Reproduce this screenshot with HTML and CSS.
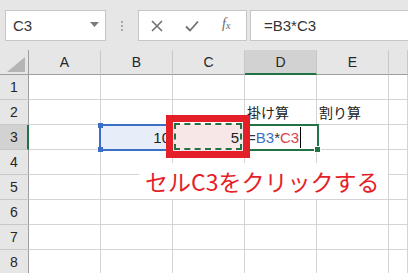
FILE: index.html
```html
<!DOCTYPE html>
<html lang="ja">
<head>
<meta charset="utf-8">
<link rel="stylesheet" href="styles.css">
</head>
<body>
<div class="app">
  <div class="toolbar">
    <div class="namebox">
      <span class="name">C3</span>
      <svg class="caret" width="9" height="5" viewBox="0 0 9 5"><path d="M0 0H9L4.5 5Z" fill="#7a7a7a"/></svg>
    </div>
    <div class="grip"><i></i><i></i><i></i></div>
    <div class="fbtns">
      <svg class="ic" width="12" height="12" viewBox="0 0 12 12"><path d="M1 1L11 11M11 1L1 11" stroke="#707070" stroke-width="1.6" fill="none"/></svg>
      <svg class="ic" width="14" height="12" viewBox="0 0 14 12"><path d="M1 6.5L5 10.5L13 1.5" stroke="#707070" stroke-width="1.8" fill="none"/></svg>
      <span class="fx">f<sub>x</sub></span>
    </div>
    <div class="finput">=B3*C3</div>
  </div>
  <div class="sheet">
    <div class="corner"><svg width="18" height="15" viewBox="0 0 18 15"><path d="M18 0V15H0Z" fill="#b5b5b5"/></svg></div>
    <div class="ch">A</div><div class="ch">B</div><div class="ch">C</div><div class="ch ch-sel">D</div><div class="ch">E</div><div class="ch"></div>

    <div class="rh">1</div><div class="c"></div><div class="c"></div><div class="c"></div><div class="c"></div><div class="c"></div><div class="c"></div>
    <div class="rh">2</div><div class="c"></div><div class="c"></div><div class="c"></div><div class="c jp">掛け算</div><div class="c jp">割り算</div><div class="c"></div>
    <div class="rh rh-sel">3</div><div class="c"></div><div class="c"></div><div class="c"></div><div class="c"></div><div class="c"></div><div class="c"></div>
    <div class="rh">4</div><div class="c"></div><div class="c"></div><div class="c"></div><div class="c"></div><div class="c"></div><div class="c"></div>
    <div class="rh">5</div><div class="c"></div><div class="c"></div><div class="c"></div><div class="c"></div><div class="c"></div><div class="c"></div>
    <div class="rh">6</div><div class="c"></div><div class="c"></div><div class="c"></div><div class="c"></div><div class="c"></div><div class="c"></div>
    <div class="rh">7</div><div class="c"></div><div class="c"></div><div class="c"></div><div class="c"></div><div class="c"></div><div class="c"></div>
    <div class="rh">8</div><div class="c"></div><div class="c"></div><div class="c"></div><div class="c"></div><div class="c"></div><div class="c"></div>

    <div class="ref-b3"><span class="val">10</span><i class="h h-tl"></i><i class="h h-bl"></i></div>
    <div class="ref-c3"><span class="val">5</span></div>
    <div class="callout-box"><div class="marquee"></div></div>
    <div class="active-d3"><span class="eq">=</span><span class="rb">B3</span><span class="eq">*</span><span class="rc">C3</span><i class="cursor"></i><i class="fill"></i></div>
    <div class="label">セルC3をクリックする</div>
  </div>
</div>
</body>
</html>
```

FILE: styles.css
```css
* { box-sizing: border-box; }
html, body { margin: 0; padding: 0; }
body {
  width: 408px; height: 273px; overflow: hidden;
  background: #fff;
  font-family: "Liberation Sans", "Noto Sans CJK JP", sans-serif;
  color: #222;
}
.app { width: 408px; height: 273px; overflow: hidden; }

.toolbar {
  height: 50px;
  background: #e6e6e6;
  display: flex;
  align-items: flex-start;
  padding: 10px 0 0 5px;
}
.namebox {
  width: 101px; height: 31px;
  background: #fff;
  border: 1px solid #c6c6c6;
  display: flex; align-items: center; justify-content: space-between;
  padding: 0 6px 0 7px;
}
.name { font-size: 15px; color: #333; }
.caret { margin-top: -2px; }
.grip {
  width: 32px; height: 31px;
  display: flex; flex-direction: column; align-items: center; justify-content: center; gap: 2px;
}
.grip i { display: block; width: 2px; height: 2px; background: #a8a8a8; }
.fbtns {
  width: 109px; height: 31px;
  background: #fff;
  border: 1px solid #c6c6c6;
  display: flex; align-items: center;
  padding: 0 0 0 12px;
}
.fbtns .ic:first-child { margin-right: 22px; }
.fbtns .ic:nth-child(2) { margin-right: 23px; }
.fx { font-family: "Liberation Serif", serif; font-style: italic; font-size: 14px; color: #6a6a6a; line-height: 1; margin-top: -3px; }
.fx sub { font-size: 10px; vertical-align: -1px; }
.finput {
  margin-left: 3px;
  flex: 1; height: 31px;
  background: #fff;
  border: 1px solid #c6c6c6; border-right: none;
  display: flex; align-items: center;
  padding-left: 13px;
  font-size: 15px; color: #333;
}

.sheet {
  position: relative;
  display: grid;
  grid-template-columns: 29px repeat(5, 72px) 1fr;
  grid-template-rows: repeat(9, 25px);
  height: 223px;
  overflow: hidden;
}
.corner, .ch, .rh {
  background: #e6e6e6;
  display: flex; align-items: center; justify-content: center;
  font-size: 14px; color: #262626;
}
.corner { border-right: 1px solid #9e9e9e; border-bottom: 1px solid #9e9e9e; align-items: flex-end; justify-content: flex-end; padding: 0 3px 2px 0; }
.ch { border-right: 1px solid #c8c8c8; border-bottom: 1px solid #9e9e9e; }
.ch-sel { background: #d2d2d2; border-bottom: 2px solid #217346; padding-top: 1px; }
.rh { border-right: 1px solid #9e9e9e; border-bottom: 1px solid #c8c8c8; }
.rh-sel { background: #d2d2d2; border-right: 2px solid #217346; padding-left: 1px; }
.c {
  border-right: 1px solid #d4d4d4; border-bottom: 1px solid #d4d4d4;
  font-size: 14px; display: flex; align-items: center; padding: 0 2px;
}
.jp { font-family: "Noto Sans CJK JP", sans-serif; font-size: 14px; color: #222; }

.ref-b3 {
  position: absolute; left: 99px; top: 74px; width: 74px; height: 27px;
  border: 2px solid #3b6fc6; background: #e8eef9;
  z-index: 1; display: flex; align-items: center; justify-content: flex-end;
  font-size: 15px; padding-right: 1px;
}
.h { position: absolute; width: 5px; height: 5px; background: #3b6fc6; }
.h-tl { left: -3px; top: -3px; }
.h-bl { left: -3px; bottom: -3px; }
.ref-c3 {
  position: absolute; left: 173px; top: 74px; width: 71px; height: 27px;
  background: #f7e7e7; z-index: 1;
  display: flex; align-items: center; justify-content: flex-end; padding-right: 5px;
  font-size: 15px;
}
.callout-box {
  position: absolute; left: 166px; top: 65px; width: 84px; height: 43px;
  border: 7px solid #e51f28; z-index: 2; padding: 1px;
}
.marquee {
  width: 100%; height: 100%;
  border: 2px dashed #217346;
}
.active-d3 {
  position: absolute; left: 244px; top: 74px; width: 75px; height: 27px;
  border: 2px solid #217346; background: #fff; z-index: 1;
  display: flex; align-items: center; padding-left: 1px;
  font-size: 15px;
}
.eq { color: #333; }
.rb { color: #3b6fc6; }
.rc { color: #d9414b; }
.cursor { display: block; width: 1px; height: 21px; background: #000; margin-left: 1px; }
.fill { position: absolute; right: -4px; bottom: -4px; width: 5px; height: 5px; background: #217346; border: 1px solid #fff; box-sizing: content-box; }
.label {
  position: absolute; left: 139px; top: 113px; width: 249px; height: 36px;
  background: #fff; z-index: 1;
  font-family: "Noto Sans CJK JP", sans-serif; font-size: 23px; color: #e51f28;
  line-height: 36px; padding-left: 6px; white-space: nowrap;
}
```
